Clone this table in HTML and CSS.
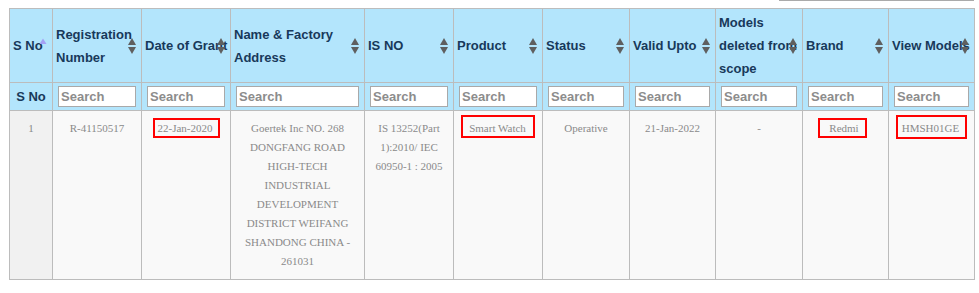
FILE: index.html
```html
<!DOCTYPE html>
<html>
<head>
<meta charset="utf-8">
<link rel="stylesheet" href="styles.css">
</head>
<body>
<div class="page">
  <div class="topbar"><div class="global-search"></div></div>
  <table class="grid">
    <colgroup>
      <col style="width:43px"><col style="width:89px"><col style="width:89px"><col style="width:134px">
      <col style="width:89px"><col style="width:89px"><col style="width:87px"><col style="width:86px">
      <col style="width:87px"><col style="width:86px"><col style="width:86px">
    </colgroup>
    <thead>
      <tr class="head-row">
        <th>S No<svg class="sort asc" viewBox="0 0 8 16" width="8" height="16"><polygon points="4,0.5 7.5,6 0.5,6" fill="#a3a1f5"/></svg></th>
        <th>Registration Number<svg class="sort" viewBox="0 0 8 16" width="8" height="16"><polygon points="4,0 8,7 0,7" fill="#5f5f5f"/><polygon points="0,9 8,9 4,16" fill="#5f5f5f"/></svg></th>
        <th class="nowrap">Date of Grant<svg class="sort" viewBox="0 0 8 16" width="8" height="16"><polygon points="4,0 8,7 0,7" fill="#5f5f5f"/><polygon points="0,9 8,9 4,16" fill="#5f5f5f"/></svg></th>
        <th>Name &amp; Factory Address<svg class="sort" viewBox="0 0 8 16" width="8" height="16"><polygon points="4,0 8,7 0,7" fill="#5f5f5f"/><polygon points="0,9 8,9 4,16" fill="#5f5f5f"/></svg></th>
        <th>IS NO<svg class="sort" viewBox="0 0 8 16" width="8" height="16"><polygon points="4,0 8,7 0,7" fill="#5f5f5f"/><polygon points="0,9 8,9 4,16" fill="#5f5f5f"/></svg></th>
        <th>Product<svg class="sort" viewBox="0 0 8 16" width="8" height="16"><polygon points="4,0 8,7 0,7" fill="#5f5f5f"/><polygon points="0,9 8,9 4,16" fill="#5f5f5f"/></svg></th>
        <th>Status<svg class="sort" viewBox="0 0 8 16" width="8" height="16"><polygon points="4,0 8,7 0,7" fill="#5f5f5f"/><polygon points="0,9 8,9 4,16" fill="#5f5f5f"/></svg></th>
        <th>Valid Upto<svg class="sort" viewBox="0 0 8 16" width="8" height="16"><polygon points="4,0 8,7 0,7" fill="#5f5f5f"/><polygon points="0,9 8,9 4,16" fill="#5f5f5f"/></svg></th>
        <th>Models deleted from scope<svg class="sort" viewBox="0 0 8 16" width="8" height="16"><polygon points="4,0 8,7 0,7" fill="#5f5f5f"/><polygon points="0,9 8,9 4,16" fill="#5f5f5f"/></svg></th>
        <th>Brand<svg class="sort" viewBox="0 0 8 16" width="8" height="16"><polygon points="4,0 8,7 0,7" fill="#5f5f5f"/><polygon points="0,9 8,9 4,16" fill="#5f5f5f"/></svg></th>
        <th class="nowrap">View Models<svg class="sort" viewBox="0 0 8 16" width="8" height="16"><polygon points="4,0 8,7 0,7" fill="#5f5f5f"/><polygon points="0,9 8,9 4,16" fill="#5f5f5f"/></svg></th>
      </tr>
      <tr class="filter-row">
        <th class="filter-label">S No</th>
        <th><input class="filter" type="text" placeholder="Search"></th>
        <th><input class="filter" type="text" placeholder="Search"></th>
        <th><input class="filter" type="text" placeholder="Search"></th>
        <th><input class="filter" type="text" placeholder="Search"></th>
        <th><input class="filter" type="text" placeholder="Search"></th>
        <th><input class="filter" type="text" placeholder="Search"></th>
        <th><input class="filter" type="text" placeholder="Search"></th>
        <th><input class="filter" type="text" placeholder="Search"></th>
        <th><input class="filter" type="text" placeholder="Search"></th>
        <th><input class="filter" type="text" placeholder="Search"></th>
      </tr>
    </thead>
    <tbody>
      <tr class="data-row">
        <td class="sorted">1</td>
        <td>R-41150517</td>
        <td><span class="mark mark-date">22-Jan-2020</span></td>
        <td>Goertek Inc NO. 268 DONGFANG ROAD HIGH-TECH INDUSTRIAL DEVELOPMENT DISTRICT WEIFANG SHANDONG CHINA - 261031</td>
        <td>IS 13252(Part 1):2010/ IEC 60950-1 : 2005</td>
        <td class="tight"><span class="mark mark-product">Smart Watch</span></td>
        <td>Operative</td>
        <td>21-Jan-2022</td>
        <td>-</td>
        <td><span class="mark mark-brand">Redmi</span></td>
        <td class="tight"><span class="mark mark-model">HMSH01GE</span></td>
      </tr>
    </tbody>
  </table>
</div>
</body>
</html>
```

FILE: styles.css
```css
html, body {
  margin: 0;
  padding: 0;
  background: #ffffff;
}

.page {
  padding-left: 9px;
  width: 965px;
}

.topbar {
  height: 8px;
  display: flex;
  justify-content: flex-end;
}

.global-search {
  width: 195px;
  height: 0;
  border-top: 1px solid #aaaaaa;
}

.grid {
  table-layout: fixed;
  width: 965px;
  border-collapse: collapse;
  border: 1px solid #bcbcbc;
}

.grid th,
.grid td {
  border: 1px solid #bcbcbc;
}

.head-row th {
  position: relative;
  background: #b3e5fc;
  color: #18395a;
  font-family: "Liberation Sans", Arial, sans-serif;
  font-weight: bold;
  font-size: 13px;
  line-height: 23px;
  text-align: left;
  vertical-align: middle;
  padding: 2px 3px;
  height: 69px;
}

.head-row th.nowrap {
  white-space: nowrap;
}

.sort {
  position: absolute;
  right: 5px;
  top: 50%;
  margin-top: -8px;
  display: block;
}

.filter-row th {
  background: #b3e5fc;
  padding: 3px 5px;
  height: 21px;
  vertical-align: middle;
}

.filter-label {
  color: #18395a;
  font-family: "Liberation Sans", Arial, sans-serif;
  font-weight: bold;
  font-size: 13px;
  text-align: center;
}

.filter {
  display: block;
  box-sizing: border-box;
  width: 100%;
  height: 21px;
  margin: 0;
  padding: 0 2px;
  border: 1px solid #a9a9a9;
  background: #ffffff;
  font-family: "Liberation Sans", Arial, sans-serif;
  font-weight: bold;
  font-size: 13px;
  color: #333;
}

.filter::placeholder {
  color: #8c8c8c;
  opacity: 1;
}

.data-row td {
  background: #f9f9f9;
  color: #8a8a8a;
  font-family: "Liberation Serif", "Times New Roman", serif;
  font-size: 11px;
  line-height: 19px;
  text-align: center;
  vertical-align: top;
  padding: 8px 10px;
}

.data-row td.tight {
  padding-left: 4px;
  padding-right: 4px;
}

.data-row td.sorted {
  background: #f1f1f1;
}

.mark {
  border: 2px solid #ff0000;
  white-space: nowrap;
}

.mark-date {
  padding: 2px 5px 2px 3px;
}

.mark-product {
  padding: 5px 7px 2px 6px;
}

.mark-brand {
  padding: 2px 6px 2px 9px;
  margin-right: 6px;
}

.mark-model {
  padding: 5px 6px 3px 4px;
}
```
